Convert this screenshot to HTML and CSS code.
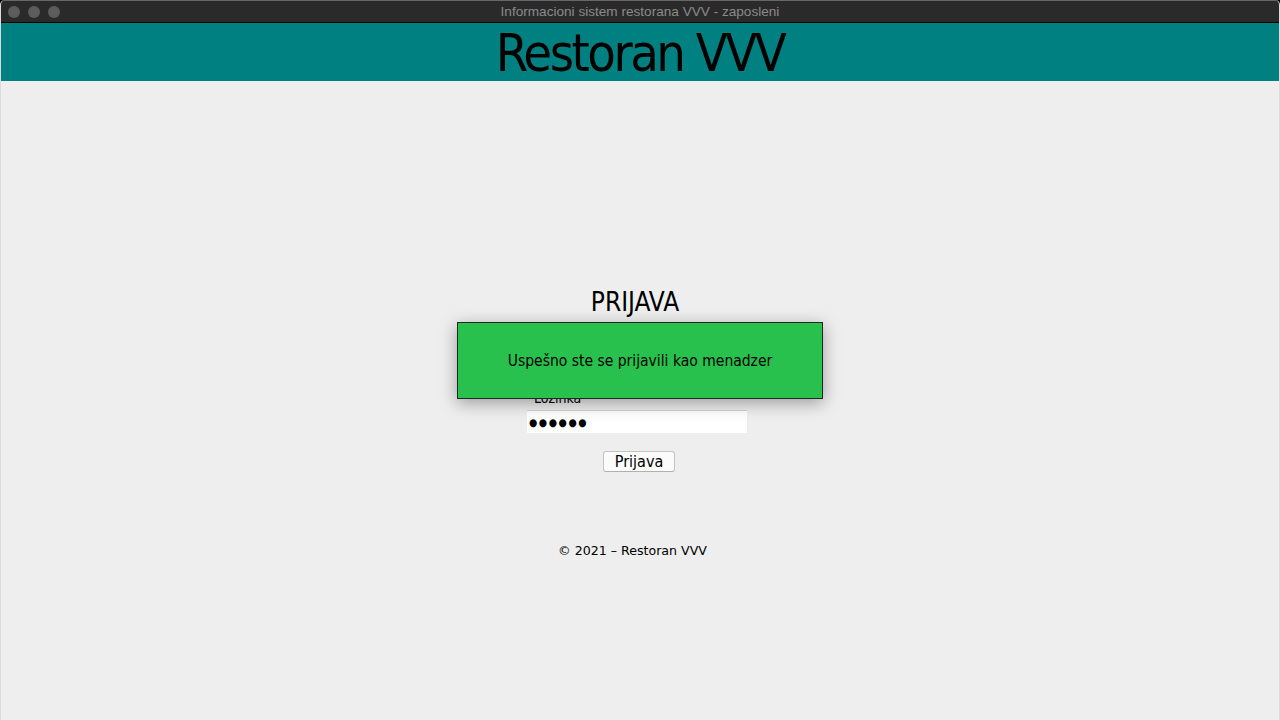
FILE: index.html
```html
<!DOCTYPE html>
<html lang="sr">
<head>
<meta charset="utf-8">
<title>Informacioni sistem restorana VVV - zaposleni</title>
<link rel="stylesheet" href="styles.css">
</head>
<body>
<div class="window">
  <div class="titlebar">
    <div class="lights">
      <span class="light"></span>
      <span class="light"></span>
      <span class="light"></span>
    </div>
    <div class="title-text">Informacioni sistem restorana VVV - zaposleni</div>
  </div>
  <header class="header">
    <h1 class="brand">Restoran VVV</h1>
  </header>
  <main class="main">
    <form class="login" onsubmit="return false">
      <h2 class="login-title">PRIJAVA</h2>
      <div class="field-spacer"></div>
      <div class="input"></div>
      <label class="field-label">Lozinka</label>
      <div class="input password">●●●●●●</div>
      <button class="btn" type="button">Prijava</button>
    </form>
    <footer class="footer">© 2021 – Restoran VVV</footer>
    <div class="toast">Uspešno ste se prijavili kao menadzer</div>
  </main>
</div>
</body>
</html>
```
FILE: styles.css
```css
* { box-sizing: border-box; }
html, body { margin: 0; padding: 0; }
body {
  width: 1280px;
  height: 720px;
  overflow: hidden;
  background: #000;
  font-family: "DejaVu Sans Condensed", "DejaVu Sans", sans-serif;
}
.window {
  width: 1280px;
  height: 720px;
  display: flex;
  flex-direction: column;
  background: #eeeeee;
  border-radius: 5px 5px 0 0;
  overflow: hidden;
  border-left: 1px solid #dcdcdc;
  border-right: 1px solid #dcdcdc;
}
.titlebar {
  height: 23px;
  flex: 0 0 23px;
  background: #2a2a2a;
  border-top: 1px solid #666;
  border-bottom: 1px solid #000;
  position: relative;
  display: flex;
  align-items: center;
  justify-content: center;
}
.lights {
  position: absolute;
  left: 7px;
  top: 5px;
  display: flex;
  gap: 8px;
}
.light {
  width: 12px;
  height: 12px;
  border-radius: 50%;
  background: #5c5c5c;
}
.title-text {
  font-family: "Liberation Sans", "Noto Sans", sans-serif;
  font-size: 13.6px;
  color: #8a8a8a;
}
.header {
  height: 58px;
  flex: 0 0 58px;
  background: #008080;
  display: flex;
  justify-content: center;
  align-items: center;
}
.brand {
  margin: 2px 0 0 0;
  font-weight: normal;
  font-size: 52px;
  letter-spacing: -2.5px;
  color: #000;
  line-height: 1;
}
.main {
  flex: 1;
  position: relative;
  display: flex;
  flex-direction: column;
  align-items: center;
  padding-top: 206px;
}
.login {
  display: flex;
  flex-direction: column;
  align-items: center;
  width: 220px;
  margin-left: -6px;
}
.login-title {
  margin: 0 0 10px -4px;
  font-weight: normal;
  font-size: 26px;
  line-height: 30px;
  color: #000;
}
.field-spacer {
  height: 28px;
}
.field-label {
  align-self: flex-start;
  margin: 12px 0 4px 7px;
  font-size: 14px;
  line-height: 16px;
  color: #000;
}
.input {
  width: 220px;
  height: 23px;
  background: #fff;
  border-top: 1px solid #d4d4d4;
  font-size: 14px;
  line-height: 22px;
  padding-left: 2px;
  color: #000;
}
.password {
  font-size: 10.5px;
  letter-spacing: 1.6px;
  line-height: 22px;
}
.btn {
  margin-top: 18px;
  margin-left: 4px;
  width: 72px;
  height: 21px;
  padding: 0;
  background: #fbfbfb;
  border: 1px solid #c4c4c4;
  border-bottom-color: #b0b0b0;
  border-radius: 3px;
  font-family: inherit;
  font-size: 16px;
  line-height: 19px;
  color: #000;
}
.footer {
  margin-top: 71px;
  margin-left: -15px;
  font-family: "DejaVu Sans", sans-serif;
  font-size: 12.6px;
  line-height: 16px;
  color: #000;
}
.toast {
  position: absolute;
  left: 456px;
  top: 241px;
  width: 366px;
  height: 77px;
  background: #28c14d;
  border: 1px solid #1e2a20;
  display: flex;
  align-items: center;
  justify-content: center;
  font-size: 15.5px;
  color: #000;
  box-shadow: 0 4px 16px rgba(0,0,0,0.35);
}
```
